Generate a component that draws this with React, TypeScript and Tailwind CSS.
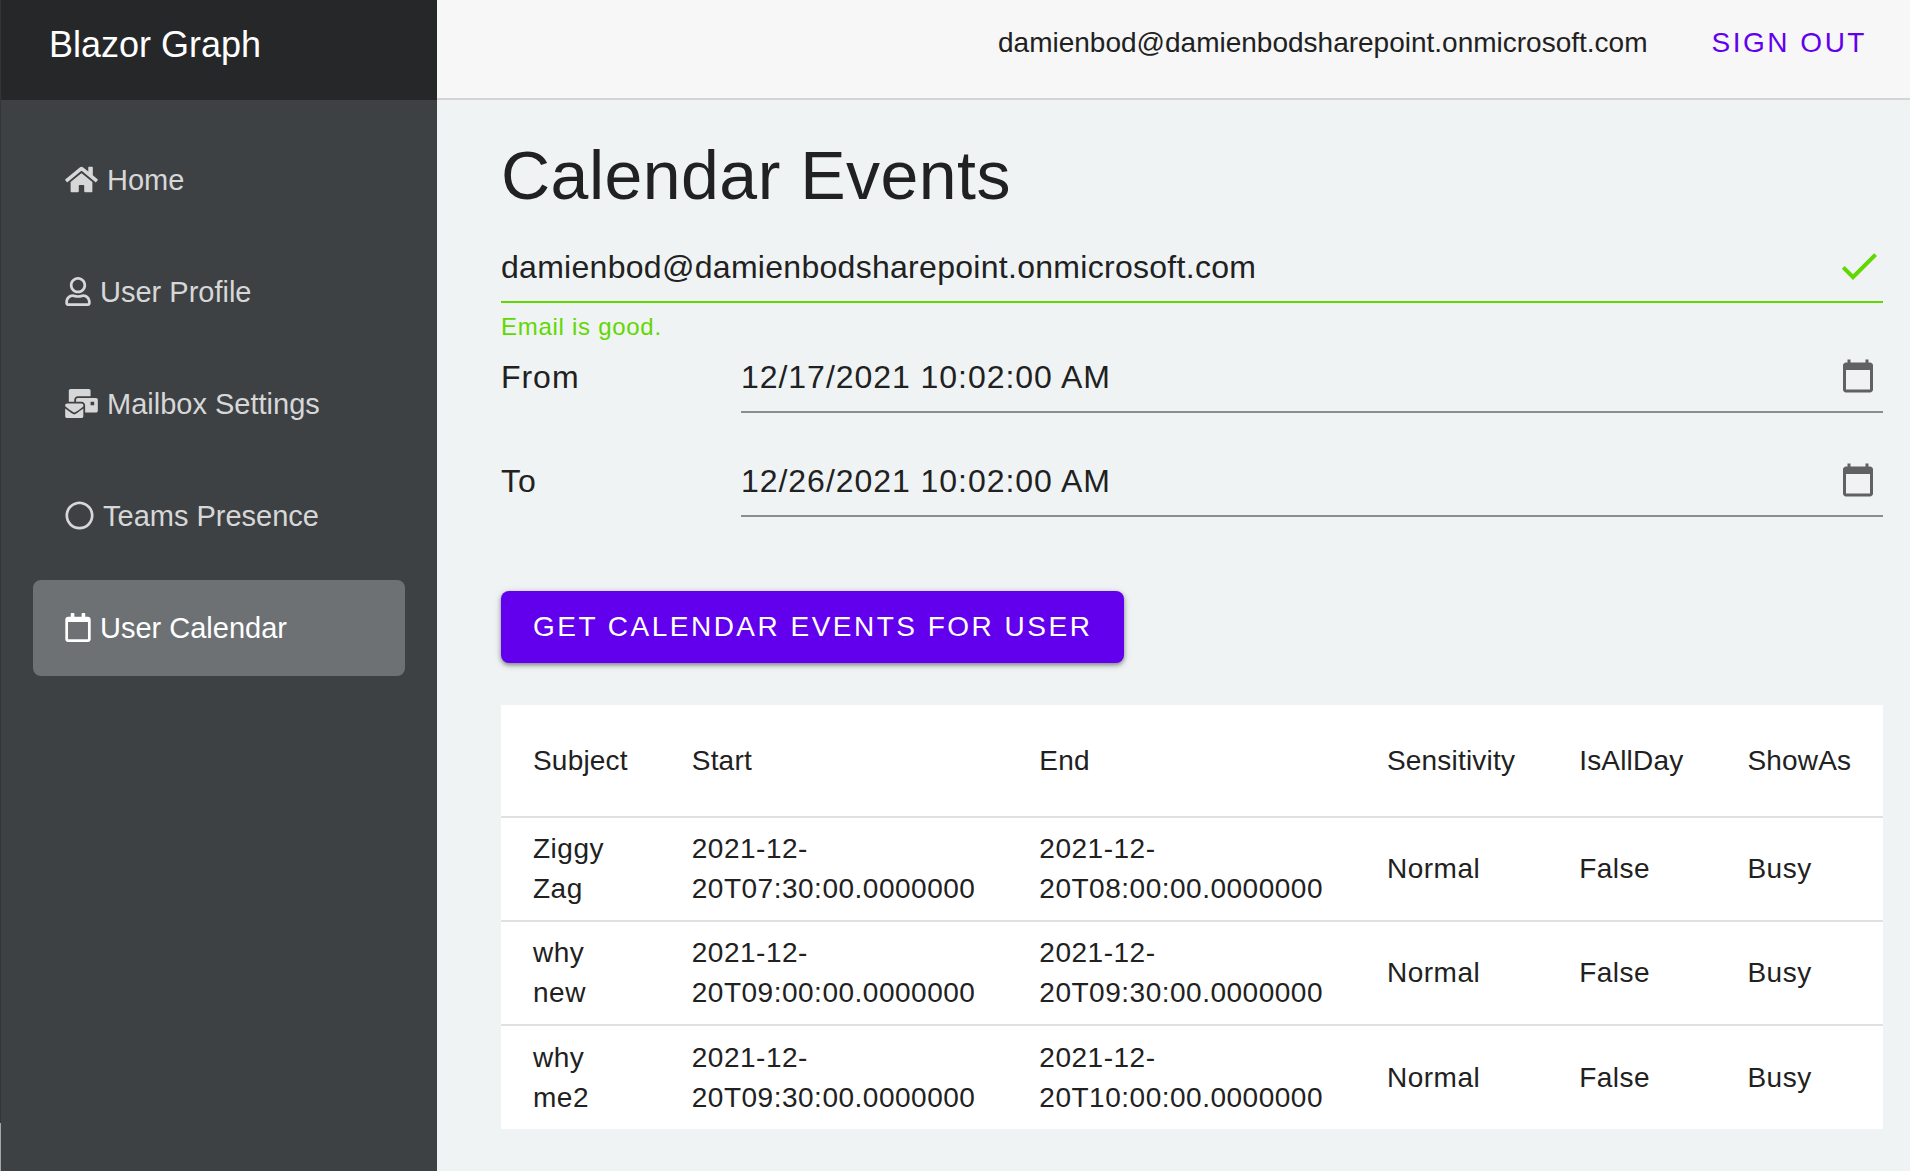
import React from "react";
import { FaHome, FaMailBulk, FaRegCalendar, FaRegCircle, FaRegUser } from "react-icons/fa";
import { MdCalendarToday, MdCheck } from "react-icons/md";

const navItems = [
  { label: "Home", Icon: FaHome, size: "mb-1 h-[29px] w-[33px]" },
  { label: "User Profile", Icon: FaRegUser, size: "mb-1 h-[29px] w-[26px]" },
  { label: "Mailbox Settings", Icon: FaMailBulk, size: "mb-1 h-[29px] w-[33px]" },
  { label: "Teams Presence", Icon: FaRegCircle, size: "mb-1 h-[29px] w-[29px]" },
  { label: "User Calendar", Icon: FaRegCalendar, size: "mb-1 h-[29px] w-[26px]", active: true },
];

const columns = ["Subject", "Start", "End", "Sensitivity", "IsAllDay", "ShowAs"];

const events = [
  ["Ziggy Zag", "2021-12-20T07:30:00.0000000", "2021-12-20T08:00:00.0000000", "Normal", "False", "Busy"],
  ["why new", "2021-12-20T09:00:00.0000000", "2021-12-20T09:30:00.0000000", "Normal", "False", "Busy"],
  ["why me2", "2021-12-20T09:30:00.0000000", "2021-12-20T10:00:00.0000000", "Normal", "False", "Busy"],
];

function Sidebar() {
  return (
    <aside className="flex w-[437px] shrink-0">
      <div className="flex w-px flex-col">
        <div className="flex-1 bg-[#353535]" />
        <div className="h-12 bg-[#a6a6a6]" />
      </div>
      <div className="flex-1 bg-[#3d4144]">
        <div className="flex h-[100px] items-start bg-[#262729] px-12 pt-[25px]">
          <a href="#" className="text-[36px] leading-10 text-white">
            Blazor Graph
          </a>
        </div>
        <nav className="flex flex-col gap-4 px-8 pt-8">
          {navItems.map(({ label, Icon, size, active }) => (
            <a
              key={label}
              href="#"
              aria-current={active ? "page" : undefined}
              className={`flex h-24 items-center gap-[9px] rounded-lg px-8 pt-0.5 text-[29px] ${
                active ? "bg-[#6d7174] text-white" : "text-[#d7d7d7]"
              }`}
            >
              <Icon className={size} />
              {label}
            </a>
          ))}
        </nav>
      </div>
    </aside>
  );
}

function DateField({ id, label, value }: { id: string; label: string; value: string }) {
  return (
    <div className="flex items-center">
      <label htmlFor={id} className="w-60 shrink-0 text-[32px] tracking-[0.03em]">
        {label}
      </label>
      <div className="flex h-[72px] flex-1 items-center border-b-2 border-[#8a8d8e]">
        <input
          id={id}
          type="text"
          defaultValue={value}
          className="min-w-0 flex-1 bg-transparent pt-0.5 text-[32px] tracking-[0.03em] outline-none"
        />
        <button type="button" aria-label={`Pick date: ${label}`} className="mr-[7px] text-[#5f6162]">
          <MdCalendarToday className="size-9" />
        </button>
      </div>
    </div>
  );
}

export default function App() {
  return (
    <div className="flex min-h-screen bg-[#eff3f4] font-['Liberation_Sans',Arial,sans-serif] text-[#212121]">
      <Sidebar />
      <div className="min-w-0 flex-1">
        <header className="flex h-[100px] items-start justify-end gap-16 border-b-2 border-[#d6d5d5] bg-[#f7f7f7] pt-[23px] pr-[43px] text-[28px] leading-10">
          <span>damienbod@damienbodsharepoint.onmicrosoft.com</span>
          <button type="button" className="tracking-[0.09em] text-[#6200ee]">
            SIGN OUT
          </button>
        </header>
        <main className="pt-[35px] pr-[27px] pl-16">
          <h1 className="text-[68px] leading-20 tracking-[0.007em]">Calendar Events</h1>
          <div className="mt-4 flex h-[72px] items-center border-b-2 border-[#61d800]">
            <input
              type="email"
              aria-label="Email"
              aria-describedby="email-help"
              defaultValue="damienbod@damienbodsharepoint.onmicrosoft.com"
              className="min-w-0 flex-1 bg-transparent pt-0.5 text-[32px] tracking-[0.009em] outline-none"
            />
            <MdCheck className="size-12 text-[#61d800]" />
          </div>
          <p id="email-help" className="pt-2.5 text-[24px] leading-7 tracking-[0.03em] text-[#61d800]">
            Email is good.
          </p>
          <div className="flex flex-col gap-8">
            <DateField id="from" label="From" value="12/17/2021 10:02:00 AM" />
            <DateField id="to" label="To" value="12/26/2021 10:02:00 AM" />
          </div>
          <button
            type="button"
            className="mt-[74px] block h-[72px] rounded-lg bg-[#6200ee] px-8 text-[28px] tracking-[0.089em] text-white shadow-[0_2px_4px_rgba(0,0,0,0.4),0_2px_10px_rgba(0,0,0,0.12)]"
          >
            GET CALENDAR EVENTS FOR USER
          </button>
          <table className="mt-[42px] w-full border-collapse bg-white text-left text-[28px] leading-10">
            <thead>
              <tr className="h-28">
                {columns.map((column) => (
                  <th key={column} scope="col" className="px-8 font-normal tracking-[0.007em]">
                    {column}
                  </th>
                ))}
              </tr>
            </thead>
            <tbody>
              {events.map((event) => (
                <tr key={event[0]} className="h-[104px] border-t-2 border-[#e0e0e0]">
                  {event.map((cell, i) => (
                    <td key={columns[i]} className="px-8 tracking-[0.018em]">
                      {cell}
                    </td>
                  ))}
                </tr>
              ))}
            </tbody>
          </table>
        </main>
      </div>
    </div>
  );
}
